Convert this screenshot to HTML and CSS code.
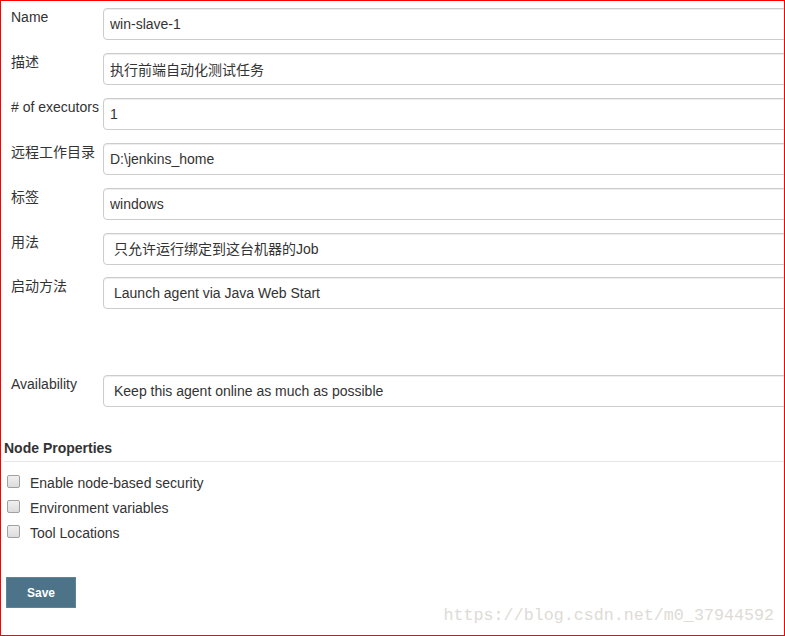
FILE: index.html
```html
<!DOCTYPE html>
<html lang="zh-CN">
<head>
  <meta charset="UTF-8" />
  <meta name="viewport" content="width=device-width, initial-scale=1.0"/>
  <title>Node configuration</title>
  <link rel="stylesheet" href="styles.css">
</head>
<body>

  <div class="frame">
    <form class="node-form" onsubmit="return false">
      <div class="form-row">
        <label>Name</label>
        <input type="text" class="field" value="win-slave-1" />
      </div>
      <div class="form-row">
        <label>描述</label>
        <input type="text" class="field" value="执行前端自动化测试任务" />
      </div>
      <div class="form-row">
        <label># of executors</label>
        <input type="text" class="field" value="1" />
      </div>
      <div class="form-row">
        <label>远程工作目录</label>
        <input type="text" class="field" value="D:\jenkins_home" />
      </div>
      <div class="form-row">
        <label>标签</label>
        <input type="text" class="field" value="windows" />
      </div>
      <div class="form-row tight">
        <label>用法</label>
        <select class="field select">
          <option>只允许运行绑定到这台机器的Job</option>
        </select>
      </div>
      <div class="form-row launch">
        <label>启动方法</label>
        <select class="field select">
          <option>Launch agent via Java Web Start</option>
        </select>
      </div>
      <div class="form-row">
        <label>Availability</label>
        <select class="field select">
          <option>Keep this agent online as much as possible</option>
        </select>
      </div>

      <h3 class="section-title">Node Properties</h3>

      <div class="checks">
        <label class="check"><span class="box"></span>Enable node-based security</label>
        <label class="check"><span class="box"></span>Environment variables</label>
        <label class="check"><span class="box"></span>Tool Locations</label>
      </div>

      <button class="save-btn" type="submit">Save</button>
    </form>

    <p class="watermark">https://blog.csdn.net/m0_37944592</p>
  </div>

</body>
</html>
```

FILE: styles.css
```css
body {
  margin: 0;
  background: #fff;
  font-family: "Liberation Sans", Arial, "Noto Sans CJK SC", sans-serif;
  font-size: 14px;
  color: #333;
}

.frame {
  position: relative;
  width: 785px;
  height: 636px;
  box-sizing: border-box;
  border: 1px solid #f00;
  overflow: hidden;
  padding: 7px 0 0 3px;
}

.form-row {
  display: grid;
  grid-template-columns: 92px 900px;
  margin: 0 0 13px 7px;
  line-height: 20px;
}

.form-row label {
  margin-top: -1px;
  white-space: nowrap;
}

.form-row.tight {
  margin-bottom: 12px;
}

.form-row.launch {
  margin-bottom: 66px;
}

.field {
  height: 32px;
  box-sizing: border-box;
  border: 1px solid #ccc;
  border-radius: 4px;
  box-shadow: inset 0 1px 1px rgba(0, 0, 0, 0.075);
  padding: 0 6px;
  font-family: "Liberation Sans", Arial, "Noto Sans CJK SC", sans-serif;
  font-size: 14px;
  color: #333;
  background: #fff;
  margin: 0;
}

.select {
  appearance: none;
  -webkit-appearance: none;
  padding: 0 10px;
}

.section-title {
  margin: 31px 0 0 0;
  padding: 0 0 3px 0;
  font-size: 14px;
  line-height: 20px;
  font-weight: bold;
  color: #333;
  border-bottom: 1px solid #e5e5e5;
}

.checks {
  margin-top: 8px;
}

.check {
  display: flex;
  align-items: center;
  height: 25px;
  padding-left: 3px;
}

.box {
  width: 11px;
  height: 11px;
  border: 1px solid #a0a0a0;
  border-radius: 2px;
  background: linear-gradient(#f0f0f0, #dcdcdc);
  margin: -2px 10px 0 0;
}

.save-btn {
  display: block;
  margin: 32px 0 0 2px;
  width: 70px;
  height: 31px;
  background: #4c7388;
  border: 1px solid #5d8599;
  color: #fff;
  font-family: "Liberation Sans", Arial, sans-serif;
  font-size: 12px;
  font-weight: bold;
  cursor: pointer;
}

.watermark {
  position: absolute;
  right: 10px;
  bottom: 10px;
  margin: 0;
  font-family: "Liberation Mono", "Courier New", monospace;
  font-size: 16.7px;
  color: #dedbd6;
}
```
